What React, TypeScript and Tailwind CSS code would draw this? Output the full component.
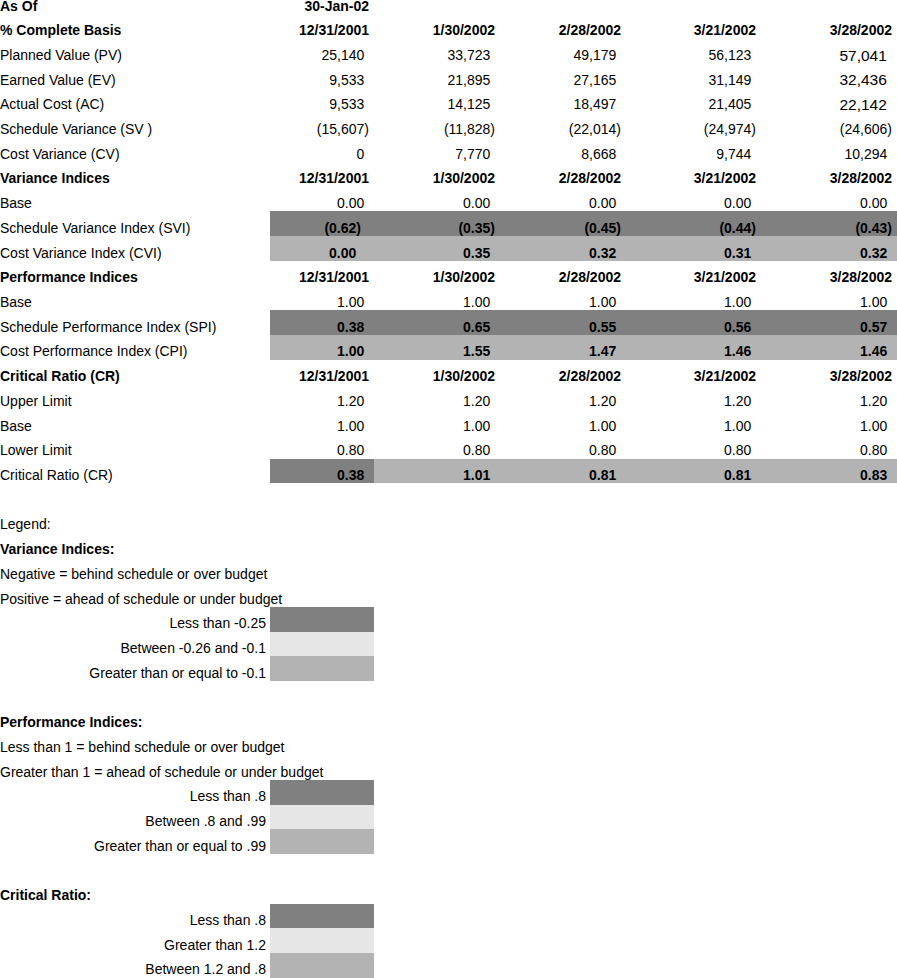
import React from "react";

const DARK = "bg-[#808080]";
const MID = "bg-[#b3b3b3]";
const LIGHT = "bg-[#e6e6e6]";

const colClasses = ["w-[104px]", "w-[126px]", "w-[126px]", "w-[135px]", "w-[136px]"];
const dates = ["12/31/2001", "1/30/2002", "2/28/2002", "3/21/2002", "3/28/2002"];

type Row =
  | { kind: "header"; label: string; values: string[] }
  | { kind: "data"; label: string; values: string[]; bold?: boolean; bands?: string[]; bigLast?: boolean; col1Pad?: boolean };

const rows: Row[] = [
  { kind: "header", label: "% Complete Basis", values: dates },
  { kind: "data", label: "Planned Value (PV)", values: ["25,140", "33,723", "49,179", "56,123", "57,041"], bigLast: true },
  { kind: "data", label: "Earned Value (EV)", values: ["9,533", "21,895", "27,165", "31,149", "32,436"], bigLast: true },
  { kind: "data", label: "Actual Cost (AC)", values: ["9,533", "14,125", "18,497", "21,405", "22,142"], bigLast: true },
  { kind: "data", label: "Schedule Variance (SV )", values: ["(15,607)", "(11,828)", "(22,014)", "(24,974)", "(24,606)"] },
  { kind: "data", label: "Cost Variance (CV)", values: ["0", "7,770", "8,668", "9,744", "10,294"] },
  { kind: "header", label: "Variance Indices", values: dates },
  { kind: "data", label: "Base", values: ["0.00", "0.00", "0.00", "0.00", "0.00"] },
  { kind: "data", label: "Schedule Variance Index (SVI)", values: ["(0.62)", "(0.35)", "(0.45)", "(0.44)", "(0.43)"], bold: true, bands: [DARK, DARK, DARK, DARK, DARK], col1Pad: true },
  { kind: "data", label: "Cost Variance Index (CVI)", values: ["0.00", "0.35", "0.32", "0.31", "0.32"], bold: true, bands: [MID, MID, MID, MID, MID], col1Pad: true },
  { kind: "header", label: "Performance Indices", values: dates },
  { kind: "data", label: "Base", values: ["1.00", "1.00", "1.00", "1.00", "1.00"] },
  { kind: "data", label: "Schedule Performance Index (SPI)", values: ["0.38", "0.65", "0.55", "0.56", "0.57"], bold: true, bands: [DARK, DARK, DARK, DARK, DARK] },
  { kind: "data", label: "Cost Performance Index (CPI)", values: ["1.00", "1.55", "1.47", "1.46", "1.46"], bold: true, bands: [MID, MID, MID, MID, MID] },
  { kind: "header", label: "Critical Ratio (CR)", values: dates },
  { kind: "data", label: "Upper Limit", values: ["1.20", "1.20", "1.20", "1.20", "1.20"] },
  { kind: "data", label: "Base", values: ["1.00", "1.00", "1.00", "1.00", "1.00"] },
  { kind: "data", label: "Lower Limit", values: ["0.80", "0.80", "0.80", "0.80", "0.80"] },
  { kind: "data", label: "Critical Ratio (CR)", values: ["0.38", "1.01", "0.81", "0.81", "0.83"], bold: true, bands: [DARK, MID, MID, MID, MID] },
];

const ROW = "h-[24.725px] flex items-center pt-[9px] whitespace-nowrap";

function Num({ v }: { v: string }) {
  const neg = v.startsWith("(");
  return (
    <span>
      {v}
      {!neg && <span className="invisible">)</span>}
    </span>
  );
}

function TableRow({ row }: { row: Row }) {
  if (row.kind === "header") {
    return (
      <div className="flex">
        <div className={`w-[270px] ${ROW} font-bold`}>{row.label}</div>
        {row.values.map((v, i) => (
          <div key={i} className={`${colClasses[i]} ${ROW} justify-end pr-[5px] font-bold`}>
            {v}
          </div>
        ))}
      </div>
    );
  }
  return (
    <div className="flex">
      <div className={`w-[270px] ${ROW}`}>{row.label}</div>
      {row.values.map((v, i) => (
        <div
          key={i}
          className={`${colClasses[i]} ${ROW} justify-end ${row.col1Pad && i === 0 ? "pr-[13px]" : "pr-[5px]"} ${
            row.bold ? "font-bold" : ""
          } ${row.bands ? row.bands[i] : ""} ${row.bigLast && i === 4 ? "text-[15.5px]" : ""}`}
        >
          <Num v={v} />
        </div>
      ))}
    </div>
  );
}

function TextRow({ children, bold }: { children: React.ReactNode; bold?: boolean }) {
  return <div className={`${ROW} ${bold ? "font-bold" : ""}`}>{children}</div>;
}

function Swatch({ label, color }: { label: string; color: string }) {
  return (
    <div className="flex">
      <div className={`w-[270px] ${ROW} justify-end pr-[4px]`}>{label}</div>
      <div className={`w-[104px] h-[24.725px] ${color}`} />
    </div>
  );
}

function Blank() {
  return <div className="h-[24.725px]" />;
}

export default function App() {
  return (
    <div
      className="w-[897px] h-[978px] overflow-hidden bg-white text-black text-[14px]"
      style={{ fontFamily: '"Liberation Sans", Arial, sans-serif' }}
    >
      <div className="flex h-[13.725px] font-bold leading-[12px] whitespace-nowrap">
        <div className="w-[270px]">As Of</div>
        <div className="w-[104px] flex justify-end pr-[5px]">30-Jan-02</div>
      </div>
      {rows.map((r, i) => (
        <TableRow key={i} row={r} />
      ))}
      <Blank />
      <TextRow>Legend:</TextRow>
      <TextRow bold>Variance Indices:</TextRow>
      <TextRow>Negative = behind schedule or over budget</TextRow>
      <TextRow>Positive = ahead of schedule or under budget</TextRow>
      <Swatch label="Less than -0.25" color={DARK} />
      <Swatch label="Between -0.26 and -0.1" color={LIGHT} />
      <Swatch label="Greater than or equal to -0.1" color={MID} />
      <Blank />
      <TextRow bold>Performance Indices:</TextRow>
      <TextRow>Less than 1 = behind schedule or over budget</TextRow>
      <TextRow>Greater than 1 = ahead of schedule or under budget</TextRow>
      <Swatch label="Less than .8" color={DARK} />
      <Swatch label="Between .8 and .99" color={LIGHT} />
      <Swatch label="Greater than or equal to .99" color={MID} />
      <Blank />
      <TextRow bold>Critical Ratio:</TextRow>
      <Swatch label="Less than .8" color={DARK} />
      <Swatch label="Greater than 1.2" color={LIGHT} />
      <Swatch label="Between 1.2 and .8" color={MID} />
    </div>
  );
}
